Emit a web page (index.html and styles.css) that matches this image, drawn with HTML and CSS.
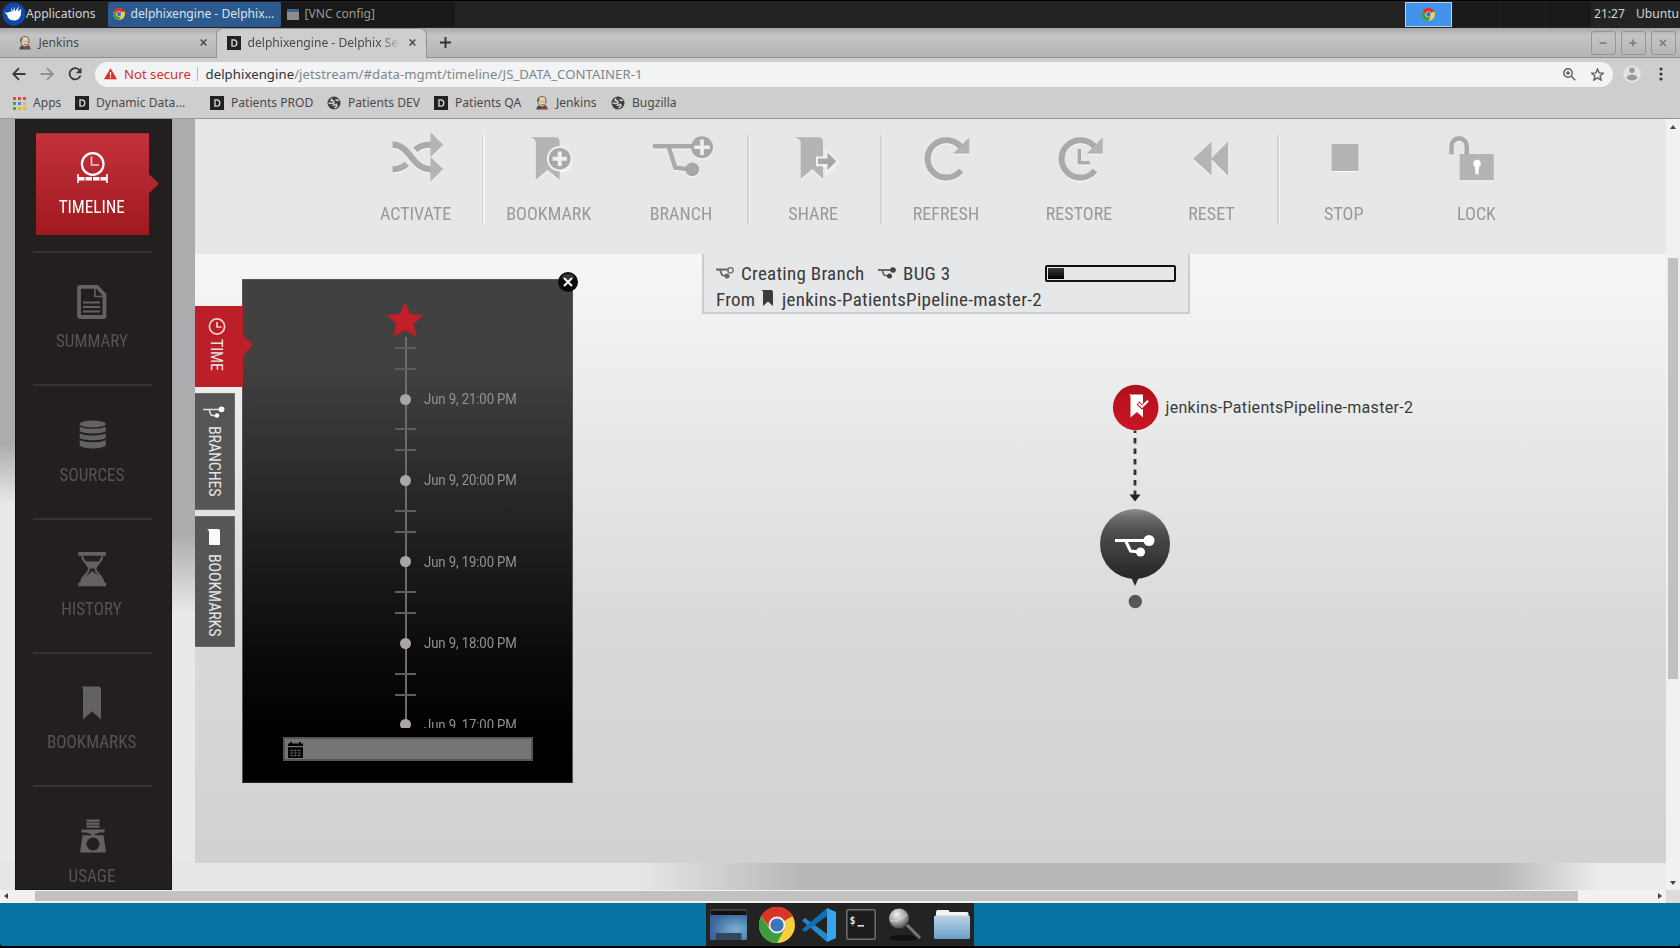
FILE: index.html
```html
<!DOCTYPE html>
<html lang="en">
<head>
<meta charset="utf-8">
<title>delphixengine - Delphix Self-Service</title>
<link rel="stylesheet" href="styles.css">
</head>
<body>
<svg class="defs" width="0" height="0">
  <defs>
    <linearGradient id="gDark" x1="0" y1="0" x2="0" y2="1"><stop offset="0" stop-color="#8c8e90"/><stop offset=".12" stop-color="#6a6c6e"/><stop offset=".35" stop-color="#4b4b4b"/><stop offset="1" stop-color="#262626"/></linearGradient>
    <linearGradient id="gRed" x1="0" y1="0" x2="0" y2="1"><stop offset="0" stop-color="#ab111c"/><stop offset=".5" stop-color="#c0121f"/><stop offset="1" stop-color="#cb1423"/></linearGradient>
    <linearGradient id="gFolder" x1="0" y1="0" x2="0" y2="1"><stop offset="0" stop-color="#bcd3e6"/><stop offset="1" stop-color="#6a9fc9"/></linearGradient>
    <radialGradient id="gDesk" cx=".7" cy=".6" r=".7"><stop offset="0" stop-color="#78b4cf"/><stop offset="1" stop-color="#3c639c"/></radialGradient>
    <radialGradient id="gLens" cx=".4" cy=".3" r=".7"><stop offset="0" stop-color="#f4f4f4"/><stop offset=".6" stop-color="#a0a0a0"/><stop offset="1" stop-color="#4d4d4d"/></radialGradient>
    <symbol id="chrome" viewBox="0 0 36 36">
      <circle cx="18" cy="18" r="18" fill="#f6cf3c"/>
      <path d="M18 18 2.4 9A18 18 0 0 1 33.6 9z" fill="#dc3327"/>
      <path d="M18 9.5H33.8A18 18 0 0 0 2.4 9L10 20z" fill="#dc3327"/>
      <path d="M2.4 9A18 18 0 0 0 18 36L25.5 22 18 18 10.5 22z" fill="#3d9b41"/>
      <circle cx="18" cy="18" r="8.4" fill="#eee"/><circle cx="18" cy="18" r="6.6" fill="#3d76b8"/>
    </symbol>
    <symbol id="dico" viewBox="0 0 14 14"><rect width="14" height="14" fill="#222"/><path d="M5 3.8v6.4h1.6a3.2 3.2 0 0 0 0-6.4z" fill="none" stroke="#ddd" stroke-width="1.3"/></symbol>
    <symbol id="jenk" viewBox="0 0 14 15"><path d="M1 14.5c0-3 2-4 3-4.500h6c2 .5 3 2 3 4.500z" fill="#3c4f5c"/><path d="M2.500 5C2.500 1.500 5 .5 7.300.5S11.500 2 11.300 5.500 9.500 11.500 7.200 11.500 2.700 9 2.500 5z" fill="#e8cdaa" stroke="#4b4238" stroke-width=".8"/><path d="M2 6.500C1.500 3 3 1.500 4.500 1.200L4 5z" fill="#6a5f55"/><path d="M5.500 6h1M8.500 6h1M6 9q1.500.8 3 0" stroke="#4b4238" stroke-width=".8" fill="none"/><path d="m6 11.500 3 1.200 3-1.500v3.300l-3-1.300-2.500 1z" fill="#c8343a"/></symbol>
    <symbol id="globe" viewBox="0 0 14 14"><circle cx="7" cy="7" r="6.500" fill="#3c3f42"/><path d="M5 2.300 4 4.500 6.500 5 7 7 4.500 7.500 1.500 7M8.500 3.500 10.500 4.500 12 4.300M5.500 9.500 9.500 8.500 10 10 7.500 12.300" fill="none" stroke="#d0d0d0" stroke-width="1.500"/></symbol>
    <symbol id="branch" viewBox="0 0 40 22"><path d="M0 5.500H34M10.500 5.500 15.500 16 25 17" fill="none" stroke="currentColor" stroke-width="3"/><circle cx="34" cy="5.500" r="5.500" fill="currentColor"/><circle cx="25.500" cy="17" r="4.600" fill="currentColor"/></symbol>
  </defs>
</svg>

<header class="panel">
  <svg class="mouse" viewBox="0 0 24 24"><circle cx="12" cy="12" r="11.500" fill="#1049ad"/><path d="M3 9.500c1.500 2 3.500 1.200 4.800 0L9.500 10 9 5.500l2.200 4.300L12 4.300l1.100 5L17 4.300l-1.300 5.200L19.500 6.800c-1 3-.2 4.800-.8 6.600-.9 3-3.500 5.100-6.700 5.100-4.600 0-6.500-3-6.800-5.500C3.800 12 3 10.800 3 9.500z" fill="#fff"/></svg>
  <span class="apps">Applications</span>
  <div class="task active"><svg class="tico"><use href="#chrome"/></svg><span>delphixengine - Delphix...</span></div>
  <div class="task"><svg class="vnc" viewBox="0 0 12 11"><rect width="12" height="11" fill="#8d8d8b"/><rect width="12" height="3" fill="#3d6391"/></svg><span>[VNC config]</span></div>
  <div class="pager"><i class="on"><svg class="pico"><use href="#chrome"/></svg></i><i></i><i></i><i></i></div>
  <span class="clock">21:27</span><span class="user">Ubuntu</span>
</header>

<div class="tabs">
  <div class="tab"><svg class="fav"><use href="#jenk"/></svg><span>Jenkins</span><svg class="x" viewBox="0 0 8 8"><path d="m.7.7 6.600 6.600M7.300.7.7 7.300"/></svg></div>
  <div class="tab cur"><svg class="fav"><use href="#dico"/></svg><span class="fade">delphixengine - Delphix Se</span><svg class="x" viewBox="0 0 8 8"><path d="m.7.7 6.600 6.600M7.300.7.7 7.300"/></svg></div>
  <svg class="plus" viewBox="0 0 10 10"><path d="M5 0v10M0 5h10"/></svg>
  <div class="wins">
    <b><svg viewBox="0 0 8 8"><path d="M.5 4h7"/></svg></b><b><svg viewBox="0 0 8 8"><path d="M.5 4h7M4 .5v7"/></svg></b><b><svg viewBox="0 0 8 8"><path d="m1 1 6 6M7 1 1 7"/></svg></b>
  </div>
</div>

<div class="nav">
  <svg class="nb" viewBox="0 0 14 14"><path d="M13.500 7H1.500M7 1.200 1.200 7 7 12.800"/></svg>
  <svg class="nb dim" viewBox="0 0 14 14"><path d="M.5 7h12M7 1.200 12.800 7 7 12.800"/></svg>
  <svg class="nb" viewBox="0 0 14 14"><path d="M11.700 3.500A5.600 5.600 0 1 0 12.500 8.500"/><path d="M13.500.5v5.700H7.800z" class="fill"/></svg>
  <div class="omni">
    <svg class="warn" viewBox="0 0 14 12"><path d="M7 0l7 12H0z" fill="#dc2f26"/><path d="M7 4v4M7 9v1.500" stroke="#fff" stroke-width="1.400"/></svg>
    <span class="ns">Not secure</span><span class="bar"></span>
    <span class="url"><em>delphixengine</em>/jetstream/#data-mgmt/timeline/JS_DATA_CONTAINER-1</span>
    <svg class="zoom" viewBox="0 0 13 13"><circle cx="5" cy="5" r="4.200"/><path d="m8 8 4.300 4.300M3 5h4M5 3v4"/></svg>
    <svg class="star" viewBox="0 0 13 13"><path d="m6.500 1 1.600 3.900 4.200.3-3.200 2.700 1 4.100-3.600-2.200L2.900 12l1-4.100L.7 5.200l4.200-.3z"/></svg>
  </div>
  <svg class="ava" viewBox="0 0 18 18"><circle cx="9" cy="9" r="8.800" fill="#e4e4e4"/><circle cx="9" cy="5.300" r="2.800" fill="#9b9b9b"/><ellipse cx="9" cy="12.500" rx="5.200" ry="3" fill="#9b9b9b"/></svg>
  <svg class="dots" viewBox="0 0 4 14"><circle cx="2" cy="2" r="1.600"/><circle cx="2" cy="7" r="1.600"/><circle cx="2" cy="12" r="1.600"/></svg>
</div>

<div class="marks">
  <a><svg class="bi" viewBox="0 0 14 14"><path d="M1 1h3v3H1zM6 1h3v3H6zM11 1h3v3h-3z" fill="#e8453c"/><path d="M1 6h3v3H1z" fill="#3aa757"/><path d="M6 6h3v3H6z" fill="#4688f1"/><path d="M11 6h3v3h-3zM6 11h3v3H6zM11 11h3v3h-3z" fill="#f5b912"/><path d="M1 11h3v3H1z" fill="#3aa757"/></svg>Apps</a>
  <a><svg class="bi"><use href="#dico"/></svg>Dynamic Data...</a>
  <a><svg class="bi"><use href="#dico"/></svg>Patients PROD</a>
  <a><svg class="bi"><use href="#globe"/></svg>Patients DEV</a>
  <a><svg class="bi"><use href="#dico"/></svg>Patients QA</a>
  <a><svg class="bi"><use href="#jenk"/></svg>Jenkins</a>
  <a><svg class="bi"><use href="#globe"/></svg>Bugzilla</a>
</div>

<div class="view">
  <aside class="side">
    <div class="item sel"><div class="card"></div><svg class="si" viewBox="0 0 40 40"><circle cx="20.700" cy="16" r="10.800" fill="none" stroke="#fff" stroke-width="2.200"/><path d="M19.500 8.500V17H27" fill="none" stroke="#f2c9cb" stroke-width="1.700"/><path d="M6 26v9M35 26v9" stroke="#fff" stroke-width="1.600"/><path d="M6 30.800h29" stroke="#fff" stroke-width="3.600" stroke-dasharray="6.500 1"/></svg><span class="c">TIMELINE</span></div>
    <div class="item"><svg class="si" viewBox="0 0 40 40"><path d="M8 4.800h17l7.500 8V34a1 1 0 0 1-1 1H8a1 1 0 0 1-1-1V5.800a1 1 0 0 1 1-1z" fill="none" stroke="#636162" stroke-width="3.800"/><path d="M23 5v9.500h9" fill="none" stroke="#636162" stroke-width="1.600"/><path d="M11 20.500h17M11 25h17M11 29.500h17" stroke="#636162" stroke-width="2"/></svg><span class="c">SUMMARY</span></div>
    <div class="item"><svg class="si" viewBox="0 0 40 40" fill="#636162"><ellipse cx="20.700" cy="9" rx="13" ry="3.400"/><path d="M7.700 11.500c4 3 22 3 26 0v4.800c-4 3-22 3-26 0zM7.700 18.200c4 3 22 3 26 0V23c-4 3-22 3-26 0zM7.700 25c4 3 22 3 26 0v5.500c-4 4-22 4-26 0z"/></svg><span class="c">SOURCES</span></div>
    <div class="item"><svg class="si" viewBox="0 0 40 40"><path d="M6.300 3H34v3.800H6.300zM6.300 33.500H34v3.800H6.300z" fill="#636162"/><path d="M10 7c1 7 7 8 7 13s-7 5-8 14M30.500 7c-1 7-7 8-7 13s7 5 8 14" fill="none" stroke="#636162" stroke-width="2"/><path d="M11.500 12.500h17L23 18v1.500h-5.500V18zM9 34c1-5 4-7 8-9l3-3 4 3c4 2 6.500 4 7.500 9z" fill="#636162"/></svg><span class="c">HISTORY</span></div>
    <div class="item"><svg class="si" viewBox="0 0 40 40"><path d="M9 3.500h17.500q2.500 0 2.500 2.500v30.500L20 28.500l-9 8V6.500q0-2-2-3z" fill="#636162"/></svg><span class="c">BOOKMARKS</span></div>
    <div class="item"><svg class="si" viewBox="0 0 40 40"><path d="M14.500 3.500h13v2.300h-13zM14.500 6.500h13v2.300h-13zM14.500 9.500h13v2.300h-13zM9.500 13.500h23v3h-5l-3 1.200H23v1.500h8.500L34 36.500H8l2.500-17.300H19v-1.500h-1.500l-3-1.200h-5z" fill="#636162"/><circle cx="21" cy="28" r="6.500" fill="#231f1e"/></svg><span class="c">USAGE</span></div>
  </aside>

  <main class="main">
    <div class="tools">
      <div class="tool sep"><svg class="ti" viewBox="0 0 60 60"><path d="M6.500 17.700C25 17.700 25 42.300 45 42.300M29.300 23Q35 17.700 45 17.700M6.500 42.300Q15 42.300 20.800 37" class="ln" stroke-width="6.300"/><path d="M44.400 5.300 57.300 18 44.400 30.500zM44.400 29.700 57.300 42.300 44.400 54.700z"/></svg><span class="c">ACTIVATE</span></div>
      <div class="tool"><svg class="ti" viewBox="0 0 60 60"><path d="M12.400 10.300H37q4.700 0 4.700 4.700v38L29.500 43 17.800 53V15.500q0-3-5.400-5.200z"/><circle cx="41.700" cy="31.700" r="12.800" class="bg"/><circle cx="41.700" cy="31.700" r="10.800" class="dk"/><path d="M41.700 24.500v14.400M34.500 31.700h14.400" class="wt" stroke-width="4"/></svg><span class="c">BOOKMARK</span></div>
      <div class="tool sep"><svg class="ti" viewBox="0 0 60 60"><path d="M1.900 19.300H45M18 21 24.300 40.700 38 42.300" class="ln" stroke-width="4.400"/><circle cx="51" cy="20.300" r="11" class="dk"/><circle cx="41.200" cy="42.300" r="6.900" class="dk"/><path d="M51 12.500v15.600M43.200 20.300h15.600" class="wt" stroke-width="3.600"/></svg><span class="c">BRANCH</span></div>
      <div class="tool sep"><svg class="ti" viewBox="0 0 60 60"><path d="M11.500 10.300H35.500q4.500 0 4.500 4.500V52L29.400 42.300 17.600 52V15.500q0-3-6.100-5.200z"/><path d="M34.500 31H44v-6.500L54 34.300l-10 10V37.700h-9.500z" class="bg halo"/><path d="M35 31.500h9.400v-6L53.300 34.300l-8.900 9V37H35z" class="dk"/></svg><span class="c">SHARE</span></div>
      <div class="tool"><svg class="ti" viewBox="0 0 60 60"><path d="M45.500 21A18.700 18.700 0 1 0 45 43.500" class="ln" stroke-width="6"/><path d="M53.300 10.300v16.500H37z"/></svg><span class="c">REFRESH</span></div>
      <div class="tool"><svg class="ti" viewBox="0 0 60 60"><path d="M46.500 21A18.700 18.700 0 1 0 46 43.500" class="ln" stroke-width="6"/><path d="M53.800 10.300v16.500H37.500z"/><path d="M30.300 22v13.800h10.500" class="ln" stroke-width="3.400"/></svg><span class="c">RESTORE</span></div>
      <div class="tool sep"><svg class="ti" viewBox="0 0 60 60"><path d="M12.300 31.700 30.600 14.700v34zM30 31.700 47 14.700v34z"/></svg><span class="c">RESET</span></div>
      <div class="tool"><svg class="ti" viewBox="0 0 60 60"><path d="M17.500 17h27v27h-27z"/></svg><span class="c">STOP</span></div>
      <div class="tool"><svg class="ti" viewBox="0 0 60 60"><path d="M5.500 27.500V19a7.600 7.600 0 0 1 15.200 0v9" class="ln" stroke-width="4.600"/><path d="M13.600 27h34.200v26.300H13.600z"/><path d="M31 32.500a4 4 0 0 1 2.200 7.200l-.9 7.500h-2.600l-.9-7.500a4 4 0 0 1 2.200-7.200z" fill="#fff"/></svg><span class="c">LOCK</span></div>
    </div>

    <div class="canvas">
      <div class="status">
        <div class="row"><svg class="sb" viewBox="0 0 18 12"><path d="M0 2.500H13M4 3l2 5 4 1" fill="none" stroke="#666" stroke-width="1.800"/><circle cx="14.500" cy="3.200" r="2.700" fill="none" stroke="#777" stroke-width="1.500"/><circle cx="11" cy="9" r="2.500" fill="#666"/></svg><span class="c w1">Creating Branch</span><svg class="sb" viewBox="0 0 18 12"><path d="M0 3H13M4 3l2 5 4 1" fill="none" stroke="#666" stroke-width="1.800"/><circle cx="15" cy="3" r="2.800" fill="#444"/><circle cx="11.500" cy="9" r="2.500" fill="#444"/></svg><span class="c w2">BUG 3</span><span class="prog"><i></i></span></div>
        <div class="row r2"><span class="c w3">From</span><svg class="bm" viewBox="0 0 12 16"><path d="M0 0h10q2 0 2 2v14l-5-4.500L2 16V2Q2 .5 0 0z" fill="#3c3c3c"/></svg><span class="c w4">jenkins-PatientsPipeline-master-2</span></div>
      </div>

      <div class="drawer">
        <nav class="vtabs">
          <div class="vt on"><svg class="v1" viewBox="0 0 18 17"><g fill="none" stroke="#f3d0d2" stroke-width="1.700"><circle cx="9" cy="8.500" r="7.600"/><path d="M9 4v5h4.500"/></g></svg><span class="c">TIME</span></div>
          <div class="vt b"><svg class="v2" viewBox="0 0 22 12"><path d="M0 3.500H18M6 3.500 8 9l5 1" fill="none" stroke="#ddd" stroke-width="1.600"/><circle cx="18.500" cy="3.300" r="2.900" fill="#fff"/><circle cx="14" cy="9.500" r="2.300" fill="#fff"/></svg><span class="c">BRANCHES</span></div>
          <div class="vt k"><svg class="v3" viewBox="0 0 13 16"><path d="M0 0h11q2 0 2 2v14H2V3Q2 1 0 0z" fill="#fafafa"/></svg><span class="c">BOOKMARKS</span></div>
        </nav>
        <section class="time">
          <svg class="close" viewBox="0 0 20 20"><circle cx="10" cy="10" r="10" fill="#0a0a0a"/><path d="M3 6a8 8 0 0 1 14 0q-7 4-14 0z" fill="#4a4a4a" opacity=".7"/><path d="m6 6 8 8M14 6l-8 8" stroke="#fff" stroke-width="2"/></svg>
          <svg class="big" viewBox="0 0 38 36"><path d="m19 0 5.200 11.900L37.500 13l-10 8.800 3.300 13L19 28l-11.800 6.800 3.300-13L.5 13l13.300-1.100z" fill="#c41f26"/></svg>
          <div class="scale">
            <div class="hr"><i></i><i></i><b></b><span>Jun 9, 21:00 PM</span></div>
            <div class="hr"><i></i><i></i><b></b><span>Jun 9, 20:00 PM</span></div>
            <div class="hr"><i></i><i></i><b></b><span>Jun 9, 19:00 PM</span></div>
            <div class="hr"><i></i><i></i><b></b><span>Jun 9, 18:00 PM</span></div>
            <div class="hr"><i></i><i></i><b></b><span>Jun 9, 17:00 PM</span></div>
          </div>
          <div class="date"><svg viewBox="0 0 15 16"><path d="M0 1.500h2V0h2v1.500h7V0h2v1.500h2V4H0zM0 5.300h15V15a1 1 0 0 1-1 1H1a1 1 0 0 1-1-1z"/><path d="M1.500 8.500h12M1.500 11h12M1.500 13.500h12M4 7v8M7.500 7v8M11 7v8" stroke="#77787a" stroke-width=".5"/></svg></div>
        </section>
      </div>

      <svg class="graph" viewBox="0 0 72 230">
        <circle cx="36.700" cy="24.500" r="22.800" fill="url(#gRed)"/>
        <path d="M30 11.500h14v23l-6-5.500-6.500 5.500V14q0-2-1.500-2.500z" fill="#fff"/><path d="m39 20 4 4 6.500-6" fill="none" stroke="#c0121f" stroke-width="4"/><path d="m39.500 20.500 3.500 3.300 6-6" fill="none" stroke="#fff" stroke-width="2.200"/>
        <path d="M36 47.500V112" stroke="#333" stroke-width="2.800" stroke-dasharray="5.500 5" stroke-dashoffset="3"/>
        <path d="M30.500 111.500h11L36 118.500z" fill="#222"/>
        <path d="M31 192h10l-5 11z" fill="#2b2b2b"/><circle cx="36" cy="161" r="35" fill="url(#gDark)"/>
        <use href="#branch" x="16" y="152" width="40" height="22" color="#fff"/>
        <circle cx="36.300" cy="218.500" r="6.700" fill="#55575a"/>
      </svg>
      <span class="glabel">jenkins-PatientsPipeline-master-2</span>
    </div>
  </main>
  <div class="vs"><svg class="up" viewBox="0 0 6 4"><path d="M3 0l3 4H0z"/></svg><i></i><svg class="dn" viewBox="0 0 6 4"><path d="M3 4L0 0h6z"/></svg></div>
</div>
<div class="hs"><svg viewBox="0 0 4 6"><path d="M0 3l4-3v6z"/></svg><i></i><svg class="rt" viewBox="0 0 4 6"><path d="M4 3L0 0v6z"/></svg><b></b></div>

<footer class="desk">
  <div class="dock">
    <svg class="d1" viewBox="0 0 37 32"><rect width="37" height="10" y="1" rx="1.500" fill="#111" stroke="#666"/><rect y="6" width="37" height="25" rx="1.500" fill="url(#gDesk)"/><rect x="5.500" y="24" width="26" height="7" fill="#33465f"/></svg>
    <svg class="d2"><use href="#chrome"/></svg>
    <svg class="d3" viewBox="0 0 34 34"><path d="M0 12.500 3 10l22 16V34z" fill="#2489ca"/><path d="M0 21.500 3 24l22-16V0z" fill="#1070b3"/><path d="M25 0l9 4v26l-9 4z" fill="#35a5f0"/></svg>
    <svg class="d4" viewBox="0 0 30 31"><rect x=".8" y=".8" width="28.400" height="29.400" rx="1.500" fill="#1d1d1d" stroke="#707070" stroke-width="1.500"/><path d="M11.500 16.800H18" stroke="#ddd" stroke-width="1.600"/><text x="3.500" y="14.500" class="dollar">$</text></svg>
    <svg class="d5" viewBox="0 0 34 34"><ellipse cx="15" cy="30" rx="14" ry="3" fill="#111"/><path d="m19 17 13 13" stroke="#777" stroke-width="3"/><circle cx="11" cy="10.500" r="10" fill="url(#gLens)"/><path d="M2 12c5 3 12-1 17-6" fill="none" stroke="#eee" opacity=".6"/></svg>
    <svg class="d6" viewBox="0 0 36 29"><path d="M2 2Q2 0 4 0h10q1.500 0 1.500 2H33q1.500 0 1.500 1.500V10H2z" fill="#f3f3f3"/><rect y="5.500" width="36" height="23.500" rx="1.500" fill="url(#gFolder)"/></svg>
  </div>
</footer>
</body>
</html>
```

FILE: styles.css
```css
* { box-sizing: border-box; }
body { margin: 0; width: 1680px; height: 948px; overflow: hidden; display: flex; flex-direction: column; background: #000; font: 12.100px/16px "Noto Sans", "DejaVu Sans", sans-serif; color: #4a4a4a; }
svg { display: block; flex: none; }
.defs { position: absolute; }
i, em { font-style: normal; }

.panel { height: 28px; flex: none; display: flex; align-items: center; background: #232323; border-top: 1px solid #000; color: #d4d4d4; white-space: nowrap; padding-bottom: 1px; }
.mouse { width: 24px; height: 24px; margin-left: 1.500px; }
.apps { width: 82px; padding-left: .5px; }
.task { height: 25px; width: 174px; display: flex; align-items: center; padding-left: 6px; background: #191919; color: #9a9a9a; }
.task.active { background: #2c5a8e; color: #dce3ea; width: 173px; padding-left: 5px; border-radius: 2px; }
.tico { width: 12px; height: 12px; margin-right: 6px; }
.vnc { width: 12px; height: 11px; margin-right: 6px; }
.pager { margin-left: auto; display: flex; width: 186px; height: 25px; }
.pager i { flex: 1; background: #191919; border-left: 1px solid #222; display: flex; align-items: center; justify-content: center; }
.pager .on { background: #4294ea; border: 1px solid #b9d2ec; }
.pico { width: 13px; height: 13px; }
.clock { width: 42px; margin-left: 3px; }
.user { width: 44px; }

.tabs { height: 30px; flex: none; display: flex; align-items: center; background: linear-gradient(#a8a8a8, #c5c5c5 25%, #b4b4b4); border-bottom: 1px solid #8f8f8f; white-space: nowrap; }
.tab { width: 216px; height: 29px; display: flex; align-items: center; padding: 0 9px 0 18px; }
.tab.cur { width: 211px; height: 30px; margin-bottom: -1px; background: #cecece; border: 1px solid #939393; border-bottom: 0; border-radius: 7px 7px 0 0; padding: 0 10px 2px 10px; }
.fav { width: 14px; height: 14px; margin-right: 6.500px; }
.x { width: 7px; height: 7px; margin-left: auto; fill: none; stroke: #444; stroke-width: 1.600; }
.fade { width: 153px; overflow: hidden; -webkit-mask-image: linear-gradient(90deg, #000 86%, transparent); mask-image: linear-gradient(90deg, #000 86%, transparent); }
.plus { width: 11px; height: 11px; margin-left: 13px; stroke: #333; stroke-width: 1.700; }
.wins { margin-left: auto; display: flex; gap: 5.500px; margin-right: 4.500px; }
.wins b { width: 24.500px; height: 24px; border: 1.500px solid #959595; border-radius: 3px; display: flex; align-items: center; justify-content: center; }
.wins svg { width: 8px; height: 8px; fill: none; stroke: #777; stroke-width: 1.500; }

.nav { height: 32px; flex: none; display: flex; align-items: center; background: #cecece; padding-left: 12px; }
.nb { width: 14px; height: 14px; margin-right: 14px; fill: none; stroke: #3a3a3a; stroke-width: 1.800; }
.nb .fill { fill: #3a3a3a; stroke: none; }
.nb.dim { stroke: #8f8f8f; }
.omni { width: 1518px; height: 25px; margin-left: -1.500px; background: #f1f3f4; border-radius: 13px; display: flex; align-items: center; white-space: nowrap; font-size: 13.150px; }
.warn { width: 13px; height: 11.500px; margin-left: 9.500px; margin-right: 7px; }
.ns { color: #d93025; width: 72.500px; }
.bar { width: 1px; height: 14px; background: #b5b7b9; margin-right: 8px; }
.url { color: #80868b; width: 1357px; letter-spacing: .07px; }
.url em { color: #303134; }
.zoom, .star { width: 13px; height: 13px; fill: none; stroke: #5a5d61; stroke-width: 1.400; margin-right: 15px; }
.omni .star { margin-right: 0; }
.ava { width: 18px; height: 18px; margin-left: 10.500px; }
.dots { width: 4px; height: 14px; margin-left: 17.500px; fill: #3a3a3a; }

.marks { height: 29px; flex: none; display: grid; grid-template-columns: 63px 135px 117px 107px 101px 76px 90px; padding: 0 0 3px 12px; align-items: center; background: #cecece; border-bottom: 1.500px solid #999; white-space: nowrap; }
.marks a { display: flex; align-items: center; }
.bi { width: 14px; height: 14px; margin-right: 7px; }

.c { font-family: "Roboto Condensed", Roboto, sans-serif; font-stretch: 75%; font-size: 19px; line-height: 20px; white-space: nowrap; }

.view { height: 771px; flex: none; display: flex; overflow: hidden; background: linear-gradient(90deg, #e6e6e6 0 640px, #b7b8b9 800px 1500px, #ececec 1600px) 0 744px / 100% 27px no-repeat, linear-gradient(#abacae 0 325px, #e8e9eb 385px) 0 0 / 15px 744px no-repeat, linear-gradient(#abacae 0 415px, #e8e9eb 495px) 171px 0 / 24px 744px no-repeat, #e8e9eb; }
.side { width: 157px; margin-left: 15px; height: 771px; background: #231f1e; border: 1px solid #151516; border-top: 0; flex: none; overflow: hidden; padding-top: .7px; }
.item { position: relative; height: 133.700px; width: 119px; margin-left: 17px; border-bottom: 2px solid #343434; display: flex; flex-direction: column; align-items: center; padding-top: 29px; color: #555354; }
.item .si { width: 40px; height: 40px; margin-left: -2px; position: relative; }
.item .c { margin-top: 9.500px; margin-left: -1px; position: relative; transform: scaleX(.9); }
.item.sel { color: #fff; height: 133px; padding-top: 28px; }
.card { position: absolute; left: 3px; top: 13.500px; width: 123px; height: 102px; background: linear-gradient(#c4323b, #a0181f); clip-path: polygon(0 0, 113px 0, 113px 41px, 123px 50.500px, 113px 60px, 113px 102px, 0 102px); }

.main { width: 1471px; margin-left: 23px; flex: none; height: 744px; }
.tools { height: 135px; background: #e6e7e9; display: flex; padding-left: 154.500px; }
.tool { width: 132.550px; flex: none; display: flex; flex-direction: column; align-items: center; padding-top: 8px; color: #98999b; position: relative; }
.sep::after { content: ""; position: absolute; right: -3px; top: 16px; width: 3px; height: 89px; background: linear-gradient(90deg, #d2d3d5 50%, #f4f4f5 50%); }
.ti { width: 60px; height: 60px; overflow: visible; fill: #b3b4b6; filter: drop-shadow(0 1.500px .5px #fafafa); }
.ti .ln { fill: none; stroke: #a9aaac; }
.ti .dk { fill: #a6a7a9; }
.ti .bg { fill: #eff0f1; }
.ti .halo { stroke: #eff0f1; stroke-width: 3; }
.ti .wt { stroke: #eff0f1; }
.tool .c { margin-top: 17px; transform: scaleX(.95); }

.canvas { position: relative; height: 609px; background: linear-gradient(#f5f6f6, #eceded 20%, #d9dadb 60%, #d0d1d3); }
.status { position: absolute; left: 507px; top: 0; width: 488px; height: 59.500px; background: #e6e7e9; border: 2px solid #cccdd0; border-top: 0; padding: 8.500px 12px 0; color: #3a3a3a; }
.status .c { letter-spacing: .27px; }
.row { display: flex; align-items: center; height: 22px; }
.r2 { margin-top: 4px; }
.sb { width: 18px; height: 12px; margin-right: 7px; margin-top: -2px; }
.w1 { width: 137px; } .w2 { width: 142px; } .w3 { width: 45px; }
.bm { width: 12px; height: 16px; margin-right: 9px; margin-top: -3px; }
.prog { width: 131px; height: 17.500px; border: 2px solid #111; border-radius: 2px; padding: 1px; }
.prog i { display: block; width: 16px; height: 11.500px; background: linear-gradient(#3a3a3a, #000); }

.drawer { position: absolute; left: 0; top: 25px; display: flex; }
.vtabs { width: 47px; padding-top: 27px; position: relative; z-index: 2; }
.vt { width: 40px; background: #555655; border: 1px solid #6b6c6c; border-left: 0; color: #e4e4e4; display: flex; flex-direction: column; align-items: center; }
.vt .c { writing-mode: vertical-rl; font-size: 16px; margin-right: 2px; letter-spacing: -.15px; }
.vt.on { width: 58px; height: 81px; border: 0; background: #bc1f28; padding: 12px 14px 0 0; margin-bottom: 6px; clip-path: polygon(0 0, 48px 0, 48px 29px, 58px 39px, 48px 50px, 48px 81px, 0 81px); }
.vt.b { height: 117px; margin-bottom: 6px; padding-top: 11.500px; }
.vt.k { height: 131px; padding-top: 12px; }
.v1 { width: 18px; height: 17px; margin-bottom: 4px; }
.v2 { width: 22px; height: 12px; margin: 0 2px 8px 0; }
.v3 { width: 13px; height: 16px; margin: 0 2px 8.500px 0; }
.time { position: relative; width: 331px; height: 504px; background: linear-gradient(#414141 17%, #1f1f1f 52%, #0a0a0a 75%, #000 90%); border: 1px solid #555; border-bottom-color: #222; }
.close { position: absolute; right: -6px; top: -8px; width: 20px; height: 20px; }
.big { width: 38px; height: 36px; margin: 22px 0 0 143px; }
.scale { height: 391px; margin-top: -1px; overflow: hidden; }
.hr { position: relative; height: 81.400px; background: linear-gradient(#6c6c6c, #6c6c6c) 162px 0 / 2px 100% no-repeat; }
.hr:first-child { height: 67.500px; }
.hr i { position: absolute; left: 152px; width: 21px; height: 2px; background: #5e5e5e; bottom: 55.500px; }
.hr i + i { bottom: 34.500px; }
.hr b { position: absolute; left: 157px; bottom: 0; width: 11px; height: 11px; border-radius: 50%; background: #aca5a6; }
.hr span { position: absolute; left: 181px; bottom: -2.500px; font: 14px/16px Roboto, sans-serif; letter-spacing: -.1px; color: #98908f; transform: scaleX(.94); transform-origin: 0 0; white-space: nowrap; }
.date { width: 250px; height: 24px; margin: 8.500px 0 0 40px; background: #747577; border: 2px solid #545454; padding: 3px; }
.date svg { width: 15px; height: 16px; }
.graph { position: absolute; left: 904px; top: 129px; width: 72px; height: 230px; }
.glabel { position: absolute; left: 970.500px; top: 144px; font: 16px/20px Roboto, sans-serif; letter-spacing: .3px; color: #3a3a3a; }

.vs { width: 14px; flex: none; background: #f1f1f1; display: flex; flex-direction: column; align-items: center; fill: #444; }
.vs i { width: 10px; height: 421px; background: #c1c1c1; margin-top: 129px; }
.up { width: 6px; height: 4px; margin-top: 6px; }
.dn { width: 6px; height: 4px; margin-top: auto; margin-bottom: 5px; }
.hs { height: 13px; flex: none; display: flex; align-items: center; background: #f1f1f1; fill: #444; padding: 0 0 1px 4px; }
.hs svg { width: 4px; height: 6px; }
.hs i { width: 1543px; height: 10px; background: #c1c1c1; margin-left: 27px; }
.hs .rt { margin-left: auto; margin-right: 4px; }
.hs b { width: 14px; height: 13px; background: #dcdcdc; }
.desk { height: 43px; flex: none; background: #0673a2; border-radius: 0 0 3px 3px; display: flex; }
.dock { width: 268px; margin-left: 706px; background: #232323; display: flex; align-items: center; padding-left: 4px; }
.d1 { width: 37px; height: 32px; } .d2 { width: 36px; height: 36px; margin-left: 12px; }
.d3 { width: 34px; height: 34px; margin-left: 7px; } .d4 { width: 30px; height: 31px; margin-left: 10px; }
.d5 { width: 34px; height: 34px; margin-left: 12px; } .d6 { width: 36px; height: 29px; margin-left: 12px; }
.dollar { font: bold 10px "DejaVu Sans Mono", monospace; fill: #ddd; }
```
